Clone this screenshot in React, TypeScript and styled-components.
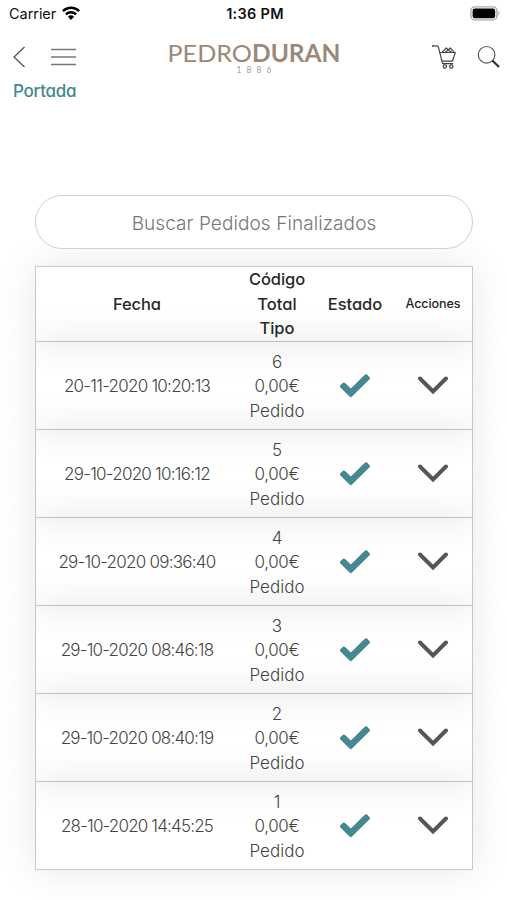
import React from "react";
import styled, { createGlobalStyle } from "styled-components";

const Global = createGlobalStyle`
  *, *::before, *::after { box-sizing: border-box; }
  body {
    margin: 0;
    background: #fff;
    font-family: Inter, "Open Sans", sans-serif;
    font-feature-settings: "cv11";
    overflow: hidden;
  }
`;

const Screen = styled.div`
  width: 507px;
  height: 900px;
  overflow: hidden;
  background: #fff;
`;

const StatusBar = styled.div`
  display: grid;
  grid-template-columns: 1fr auto 1fr;
  align-items: center;
  height: 28px;
  padding: 0 6px 1px 9px;
  color: #111;
`;

const Carrier = styled.div`
  display: flex;
  align-items: center;
  gap: 6px;
  font-size: 14.5px;
  letter-spacing: -0.05px;
  font-feature-settings: normal;
  svg { margin-top: -2px; }
`;

const Clock = styled.div`
  font-size: 14.5px;
  font-weight: 600;
  letter-spacing: 0.3px;
`;

const BatterySlot = styled.div`
  display: flex;
  justify-content: flex-end;
`;

const NavBar = styled.header`
  display: grid;
  grid-template-columns: 1fr 174px 1fr;
  height: 52px;
  padding: 0 7px 0 12px;
`;

const NavGroup = styled.div<{ $end?: boolean }>`
  display: flex;
  align-items: center;
  justify-content: ${(p) => (p.$end ? "flex-end" : "flex-start")};
  gap: ${(p) => (p.$end ? "20px" : "24px")};
  padding-top: 6px;
`;

const Logo = styled.svg`
  display: block;
  margin: 7px 0 0;
  overflow: visible;
`;

const Breadcrumb = styled.a`
  display: block;
  width: max-content;
  margin-left: 13px;
  font-size: 17px;
  line-height: 22px;
  font-weight: 450;
  letter-spacing: -0.25px;
  color: #43868f;
`;

const Content = styled.main`
  padding: 93px 35px 0 35px;
`;

const Search = styled.input`
  position: relative;
  z-index: 1;
  display: block;
  width: 438px;
  height: 54px;
  padding: 2px 0 0;
  border: 1px solid #d0d0d0;
  border-radius: 27px;
  background: #fff;
  outline: none;
  text-align: center;
  font-family: inherit;
  font-size: 19px;
  font-weight: 300;
  letter-spacing: 0.08px;
  &::placeholder { color: #777; opacity: 1; }
`;

const Table = styled.section`
  margin-top: 17px;
  border: 1px solid #d0d0d0;
  width: 438px;
`;

const Row = styled.div<{ $head?: boolean }>`
  display: grid;
  grid-template-columns: 202px 78px 78px 78px;
  align-items: center;
  justify-items: center;
  height: ${(p) => (p.$head ? "75px" : "88px")};
  border-bottom: 1px solid #ccc;
  box-shadow: 0 0 40px rgba(0, 0, 0, 0.1);
  font-size: ${(p) => (p.$head ? "16.5px" : "17px")};
  line-height: 24.4px;
  font-weight: ${(p) => (p.$head ? 450 : 300)};
  color: ${(p) => (p.$head ? "#282828" : "#444")};
  text-align: center;
  &:last-child { border-bottom: 0; height: 87px; }
`;

const Label = styled.span<{ $small?: boolean; $spacing?: number }>`
  padding-top: 1px;
  font-size: ${(p) => (p.$small ? "12.6px" : "inherit")};
  letter-spacing: ${(p) => p.$spacing ?? 0}px;
  white-space: nowrap;
`;

const Stack = styled.div<{ $raised?: boolean }>`
  display: flex;
  flex-direction: column;
  align-items: center;
  padding-top: ${(p) => (p.$raised ? "0" : "2px")};
  ${Label} { padding-top: 0; }
`;

const orders = [
  { date: "20-11-2020 10:20:13", code: "6", spacing: -0.75 },
  { date: "29-10-2020 10:16:12", code: "5", spacing: -0.75 },
  { date: "29-10-2020 09:36:40", code: "4", spacing: -0.75 },
  { date: "29-10-2020 08:46:18", code: "3", spacing: -0.8 },
  { date: "29-10-2020 08:40:19", code: "2", spacing: -0.8 },
  { date: "28-10-2020 14:45:25", code: "1", spacing: -0.83 },
];

const Wifi = () => (
  <svg width="18" height="14" viewBox="0 0 18 14">
    <g fill="none" stroke="#000" strokeWidth="2.5">
      <path d="M0.9 5.1 A11.6 11.6 0 0 1 17.1 5.1" />
      <path d="M3.9 8.4 A7.4 7.4 0 0 1 14.1 8.4" />
    </g>
    <path d="M9 14 L5.9 10.8 A4.5 4.5 0 0 1 12.1 10.8 Z" fill="#000" />
  </svg>
);

const Battery = () => (
  <svg width="31" height="15" viewBox="0 0 31 15">
    <rect x="0.9" y="0.9" width="26" height="13" rx="4" fill="#fff" stroke="#aaa" strokeWidth="1.4" />
    <rect x="2.6" y="2.6" width="22.6" height="9.6" rx="2.2" fill="#000" />
    <path d="M28.3 5 Q30.6 7.4 28.3 9.8 Z" fill="#aaa" />
  </svg>
);

const Back = () => (
  <svg width="15" height="22" viewBox="0 0 15 22" fill="none" stroke="#555" strokeWidth="1.3">
    <path d="M12.5 1 L2 11 L12.5 21" />
  </svg>
);

const Menu = () => (
  <svg width="26" height="18" viewBox="0 0 26 18" stroke="#777" strokeWidth="1.4">
    <path d="M0 1.5H25M0 9H25M0 16.5H25" />
  </svg>
);

const Cart = () => (
  <svg width="25" height="26" viewBox="0 0 25 26" fill="none" stroke="#444" strokeWidth="1.2" strokeLinejoin="round">
    <path d="M0.7 3 V1.8 H4.6 Q6 1.8 6.4 3.2 L10.6 19.6 H21" />
    <path d="M8 8.5 H23.3 L20.4 17.2 H10.2" />
    <path d="M10.2 8.2 L14.3 4 L16.3 6 L18.3 4 L22 8.2 M13.2 8.2 L16.3 6 L19.5 8.2" />
    <circle cx="12.8" cy="22.5" r="1.7" />
    <circle cx="19.3" cy="22.5" r="1.7" />
  </svg>
);

const SearchIcon = () => (
  <svg width="23" height="24" viewBox="0 0 23 24" fill="none">
    <circle cx="9.6" cy="9.8" r="8.3" stroke="#555" strokeWidth="1.2" />
    <path d="M15.4 15.5 L22 22" stroke="#333" strokeWidth="2.2" />
  </svg>
);

const Check = () => (
  <svg width="32" height="26" viewBox="0 0 32 26">
    <path
      d="M1.2 12.5 L4 9.7 Q5 9 6 9.9 L11.9 15.4 L26 1.5 Q27 .8 28 1.5 L30.8 4.4 Q31.4 5.4 30.6 6.3 L12.8 23.8 Q11.8 24.5 10.8 23.7 L1.2 14.3 Q.5 13.4 1.2 12.5 Z"
      fill="#468792"
    />
  </svg>
);

const Chevron = () => (
  <svg width="32" height="20" viewBox="0 0 32 20" fill="none">
    <path d="M3 2.5 L16 15.4 L29 2.5" stroke="#555" strokeWidth="4" strokeLinecap="round" strokeLinejoin="miter" />
  </svg>
);

export default function App() {
  return (
    <Screen>
      <Global />
      <StatusBar>
        <Carrier>Carrier <Wifi /></Carrier>
        <Clock>1:36 PM</Clock>
        <BatterySlot><Battery /></BatterySlot>
      </StatusBar>
      <NavBar>
        <NavGroup><Back /><Menu /></NavGroup>
        <Logo width="174" height="45" viewBox="0 0 174 45" fill="#9c8878" fontFamily="Lato, sans-serif">
          <text x="-1.5" y="26.5" fontSize="24" textLength="84.5" lengthAdjust="spacingAndGlyphs">PEDRO</text>
          <text x="83" y="26.5" fontSize="24" fontWeight="700" textLength="88.5" lengthAdjust="spacingAndGlyphs">DURAN</text>
          <text x="67.5" y="37.5" fontSize="8.5" textLength="35" fill="#aaa09a">1886</text>
        </Logo>
        <NavGroup $end><Cart /><SearchIcon /></NavGroup>
      </NavBar>
      <Breadcrumb>Portada</Breadcrumb>
      <Content>
        <Search placeholder="Buscar Pedidos Finalizados" />
        <Table>
          <Row $head>
            <Label $spacing={-0.1}>Fecha</Label>
            <Stack $raised><Label $spacing={-0.1}>Código</Label><Label>Total</Label><Label>Tipo</Label></Stack>
            <Label $spacing={-0.05}>Estado</Label>
            <Label $small $spacing={-0.1}>Acciones</Label>
          </Row>
          {orders.map((o) => (
            <Row key={o.code}>
              <Label $spacing={o.spacing}>{o.date}</Label>
              <Stack><Label>{o.code}</Label><Label $spacing={-0.4}>0,00€</Label><Label>Pedido</Label></Stack>
              <Check />
              <Chevron />
            </Row>
          ))}
        </Table>
      </Content>
    </Screen>
  );
}
